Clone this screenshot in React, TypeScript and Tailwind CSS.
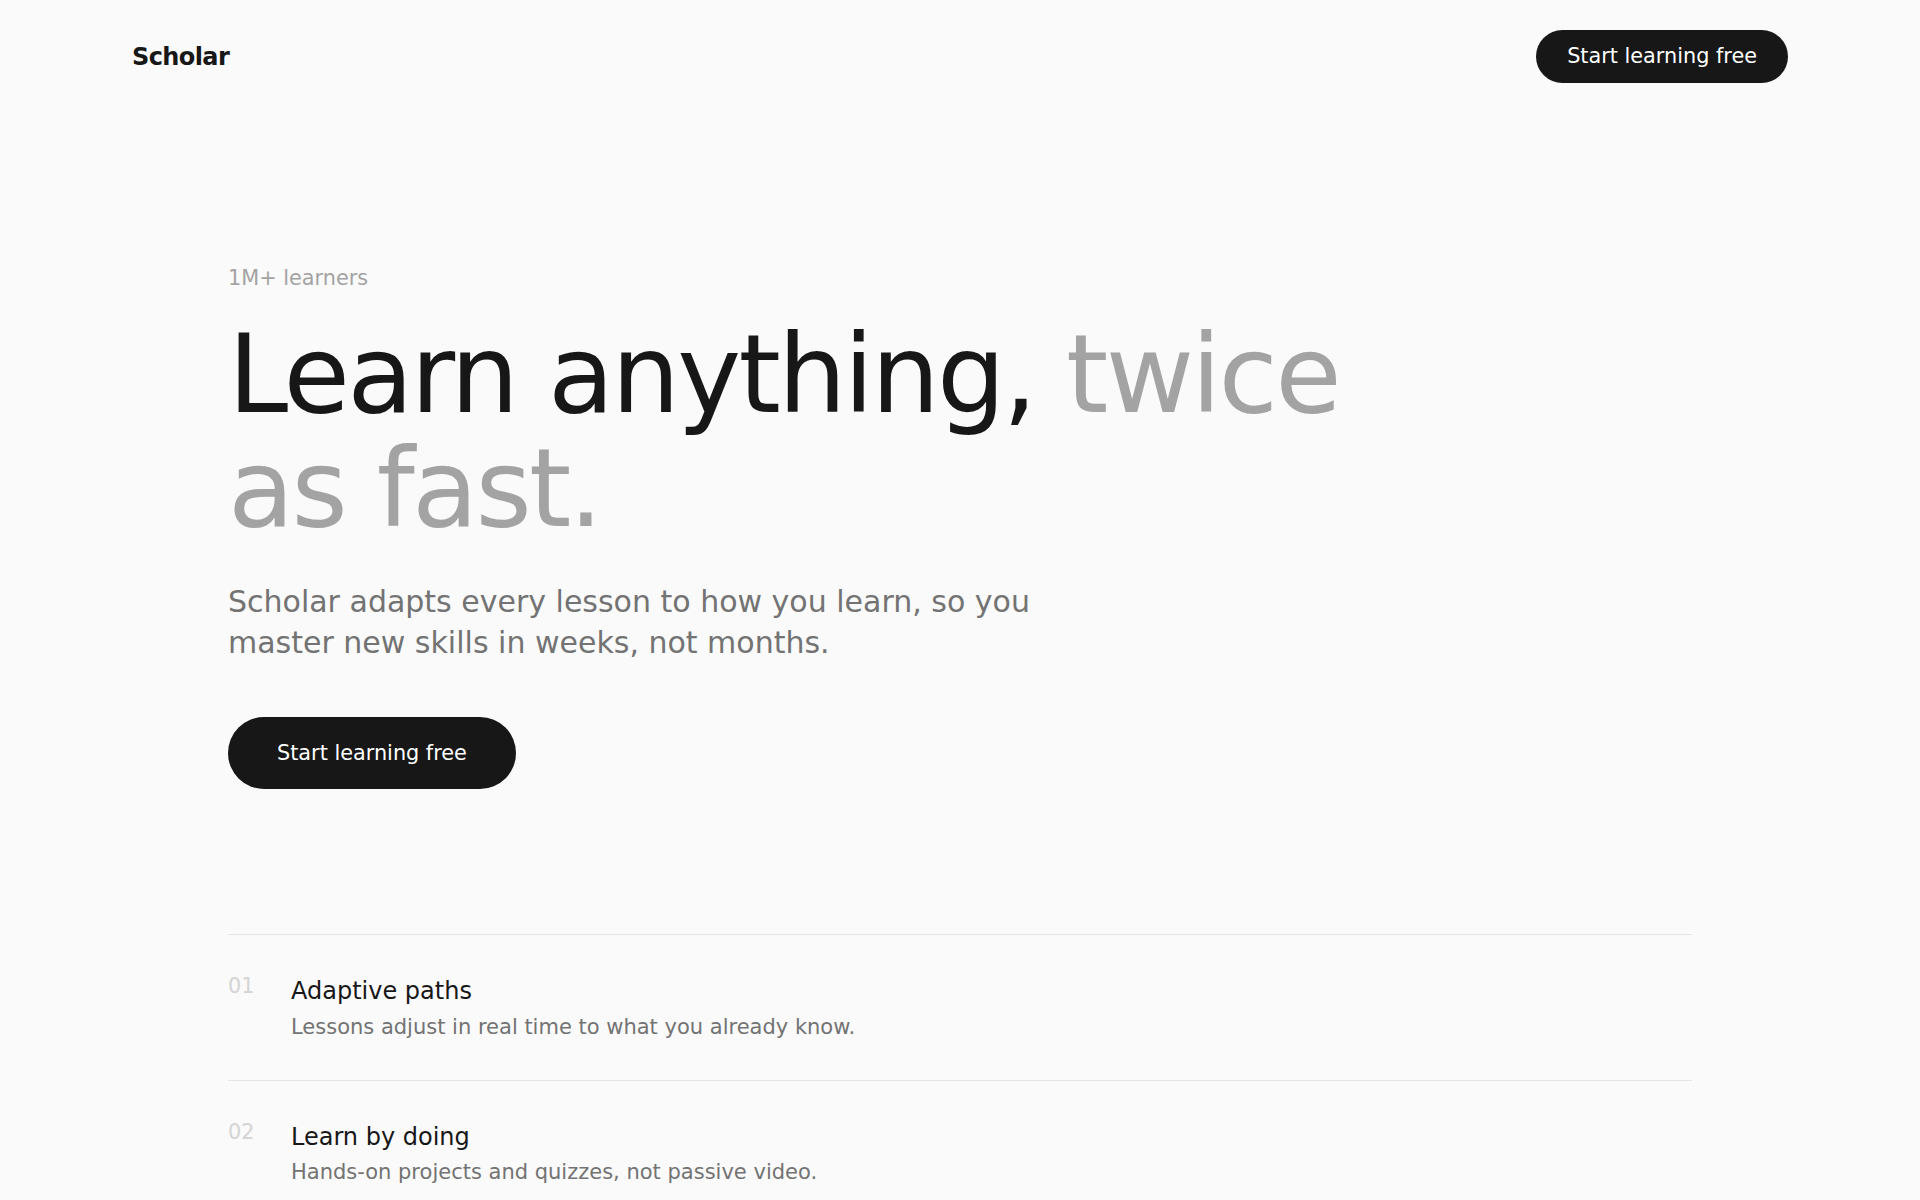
import React from 'react';

const features = [
  {
    num: '01',
    title: 'Adaptive paths',
    body: 'Lessons adjust in real time to what you already know.',
  },
  {
    num: '02',
    title: 'Learn by doing',
    body: 'Hands-on projects and quizzes, not passive video.',
  },
  {
    num: '03',
    title: 'Progress you can see',
    body: 'Clear milestones show exactly how far you have come.',
  },
];

function StartButton({ size }: { size: 'sm' | 'lg' }) {
  const dims = size === 'sm' ? 'h-[53px] px-[31px]' : 'h-[72px] px-[49px]';
  return (
    <button
      type="button"
      className={`${dims} inline-flex items-center justify-center rounded-full bg-[#171717] text-[20.8px] leading-none text-white`}
    >
      Start learning free
    </button>
  );
}

export default function App() {
  return (
    <div
      className="min-h-screen bg-[#fafafa] text-[#171717]"
      style={{ fontFamily: '"DejaVu Sans", "Noto Sans", sans-serif' }}
    >
      {/* Header */}
      <header className="flex items-center justify-between px-[132px] py-[30px]">
        <span className="text-2xl font-bold tracking-tight text-[#171717]">Scholar</span>
        <StartButton size="sm" />
      </header>

      <main className="mx-auto max-w-[1464px] pt-[150px]">
        {/* Hero */}
        <section>
          <p className="text-[20.8px] leading-[1.5] text-[#a3a3a3]">1M+ learners</p>
          <h1 className="mt-[24px] max-w-[1180px] text-[108px] font-normal leading-[1.05] tracking-tight text-[#171717]">
            Learn anything, <span className="text-[#a3a3a3]">twice as fast.</span>
          </h1>
          <p className="mt-[36px] max-w-[860px] text-[30px] leading-[1.375] text-[#737373]">
            Scholar adapts every lesson to how you learn, so you master new skills in weeks, not months.
          </p>
          <div className="mt-[54px]">
            <StartButton size="lg" />
          </div>
        </section>

        {/* Features */}
        <section className="mt-[145px]">
          {features.map((f) => (
            <div key={f.num} className="flex items-start border-t border-[#e5e5e5] pt-[37px] pb-[36px]">
              <span className="w-[63px] shrink-0 text-[20.8px] leading-[28px] text-[#d4d4d4]">{f.num}</span>
              <div className="flex flex-col pt-[3px]">
                <h3 className="text-2xl font-normal leading-[1.4] text-[#171717]">{f.title}</h3>
                <p className="mt-[3px] text-[21px] leading-[1.5] text-[#737373]">{f.body}</p>
              </div>
            </div>
          ))}
        </section>
      </main>
    </div>
  );
}
